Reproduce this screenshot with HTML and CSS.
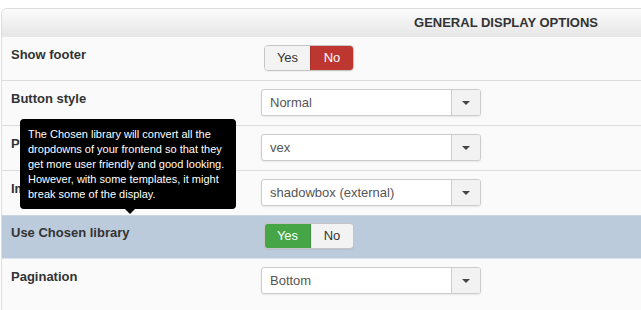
FILE: index.html
```html
<!doctype html>
<html lang="en">
  <head>
    <meta charset="UTF-8" />
    <meta name="viewport" content="width=device-width, initial-scale=1.0" />
    <title>General display options</title>
    <link rel="stylesheet" href="styles.css">
  </head>
  <body>
    <div class="panel">
      <div class="panel-head">General display options</div>

      <div class="row">
        <div class="label">Show footer</div>
        <div class="control">
          <div class="toggle">
            <span class="opt">Yes</span>
            <span class="opt opt-no">No</span>
          </div>
        </div>
      </div>

      <div class="row">
        <div class="label">Button style</div>
        <div class="control">
          <div class="select"><span class="value">Normal</span><span class="arrow"></span></div>
        </div>
      </div>

      <div class="row">
        <div class="label">Popup type</div>
        <div class="control">
          <div class="select"><span class="value">vex</span><span class="arrow"></span></div>
        </div>
      </div>

      <div class="row">
        <div class="label">Image viewer</div>
        <div class="control">
          <div class="select"><span class="value">shadowbox (external)</span><span class="arrow"></span></div>
        </div>
      </div>

      <div class="row row-hover">
        <div class="label">Use Chosen library</div>
        <div class="control">
          <div class="toggle">
            <span class="opt opt-yes">Yes</span>
            <span class="opt">No</span>
          </div>
        </div>
      </div>

      <div class="row row-last">
        <div class="label">Pagination</div>
        <div class="control">
          <div class="select"><span class="value">Bottom</span><span class="arrow"></span></div>
        </div>
      </div>

      <div class="tooltip">
        The Chosen library will convert all the dropdowns of your frontend so that they get more user friendly and good looking. However, with some templates, it might break some of the display.
      </div>
    </div>
  </body>
</html>
```

FILE: styles.css
```css
html,
body {
  margin: 0;
  overflow: hidden;
  background: #fff;
}
body {
  font-family: "Liberation Sans", Arial, sans-serif;
  font-size: 13px;
  color: #333;
}
.panel {
  position: relative;
  margin: 8px -10px 0 1px;
  border: 1px solid #ddd;
  border-bottom: 0;
  border-radius: 6px 6px 0 0;
  background: #fafafa;
  height: 301px;
}
.panel-head {
  height: 28px;
  line-height: 28px;
  padding-right: 52px;
  text-align: right;
  font-size: 13px;
  font-weight: bold;
  text-transform: uppercase;
  color: #333;
  border-radius: 6px 6px 0 0;
  background: linear-gradient(to bottom, #fbfbfb, #e6e6e6);
}
.row {
  display: flex;
  padding: 8px 0 9px;
  border-top: 1px solid #ddd;
}
.row:nth-child(2) {
  border-top: 0;
}
.row-hover {
  background: #bccbdc;
  border-top-color: #cfd6de;
  padding-top: 7px;
}
.row-last {
  border-top-color: #dde3ea;
}
.label {
  width: 250px;
  padding-left: 9px;
  padding-top: 1px;
  line-height: 18px;
  font-weight: bold;
  color: #333;
}
.control {
  display: flex;
}
.toggle {
  display: flex;
  height: 26px;
  margin-left: 3px;
  border: 1px solid #c5c5c5;
  border-radius: 4px;
  box-sizing: border-box;
  overflow: hidden;
  box-shadow: 0 1px 1px rgba(0, 0, 0, 0.05);
}
.opt {
  width: 45px;
  line-height: 24px;
  text-align: center;
  background: #f3f3f3;
  color: #333;
}
.opt + .opt {
  width: 42px;
  border-left: 1px solid #c5c5c5;
}
.opt-no {
  background: #bd362f;
  border-left-color: #a8302a !important;
  color: #fff;
}
.opt-yes {
  background: #46a546;
  color: #fff;
}
.opt-yes + .opt {
  border-left-color: #3d913d;
}
.select {
  display: flex;
  width: 220px;
  height: 27px;
  box-sizing: border-box;
  border: 1px solid #ccc;
  border-radius: 3px;
  background: #fff;
  box-shadow: 0 1px 2px rgba(0, 0, 0, 0.08);
  overflow: hidden;
}
.value {
  flex: 1;
  padding-left: 8px;
  line-height: 25px;
  color: #555;
}
.arrow {
  position: relative;
  width: 28px;
  border-left: 1px solid #ccc;
  background: #f2f2f2;
}
.arrow::after {
  content: "";
  position: absolute;
  left: 10px;
  top: 11px;
  border-left: 4px solid transparent;
  border-right: 4px solid transparent;
  border-top: 4px solid #444;
}
.tooltip {
  position: absolute;
  left: 18px;
  top: 110px;
  width: 200px;
  padding: 8px 8px 7px;
  border-radius: 4px;
  background: #000;
  color: #fff;
  font-size: 11px;
  line-height: 15px;
}
.tooltip::after {
  content: "";
  position: absolute;
  left: 105px;
  bottom: -5px;
  border-left: 5px solid transparent;
  border-right: 5px solid transparent;
  border-top: 5px solid #000;
}
```
